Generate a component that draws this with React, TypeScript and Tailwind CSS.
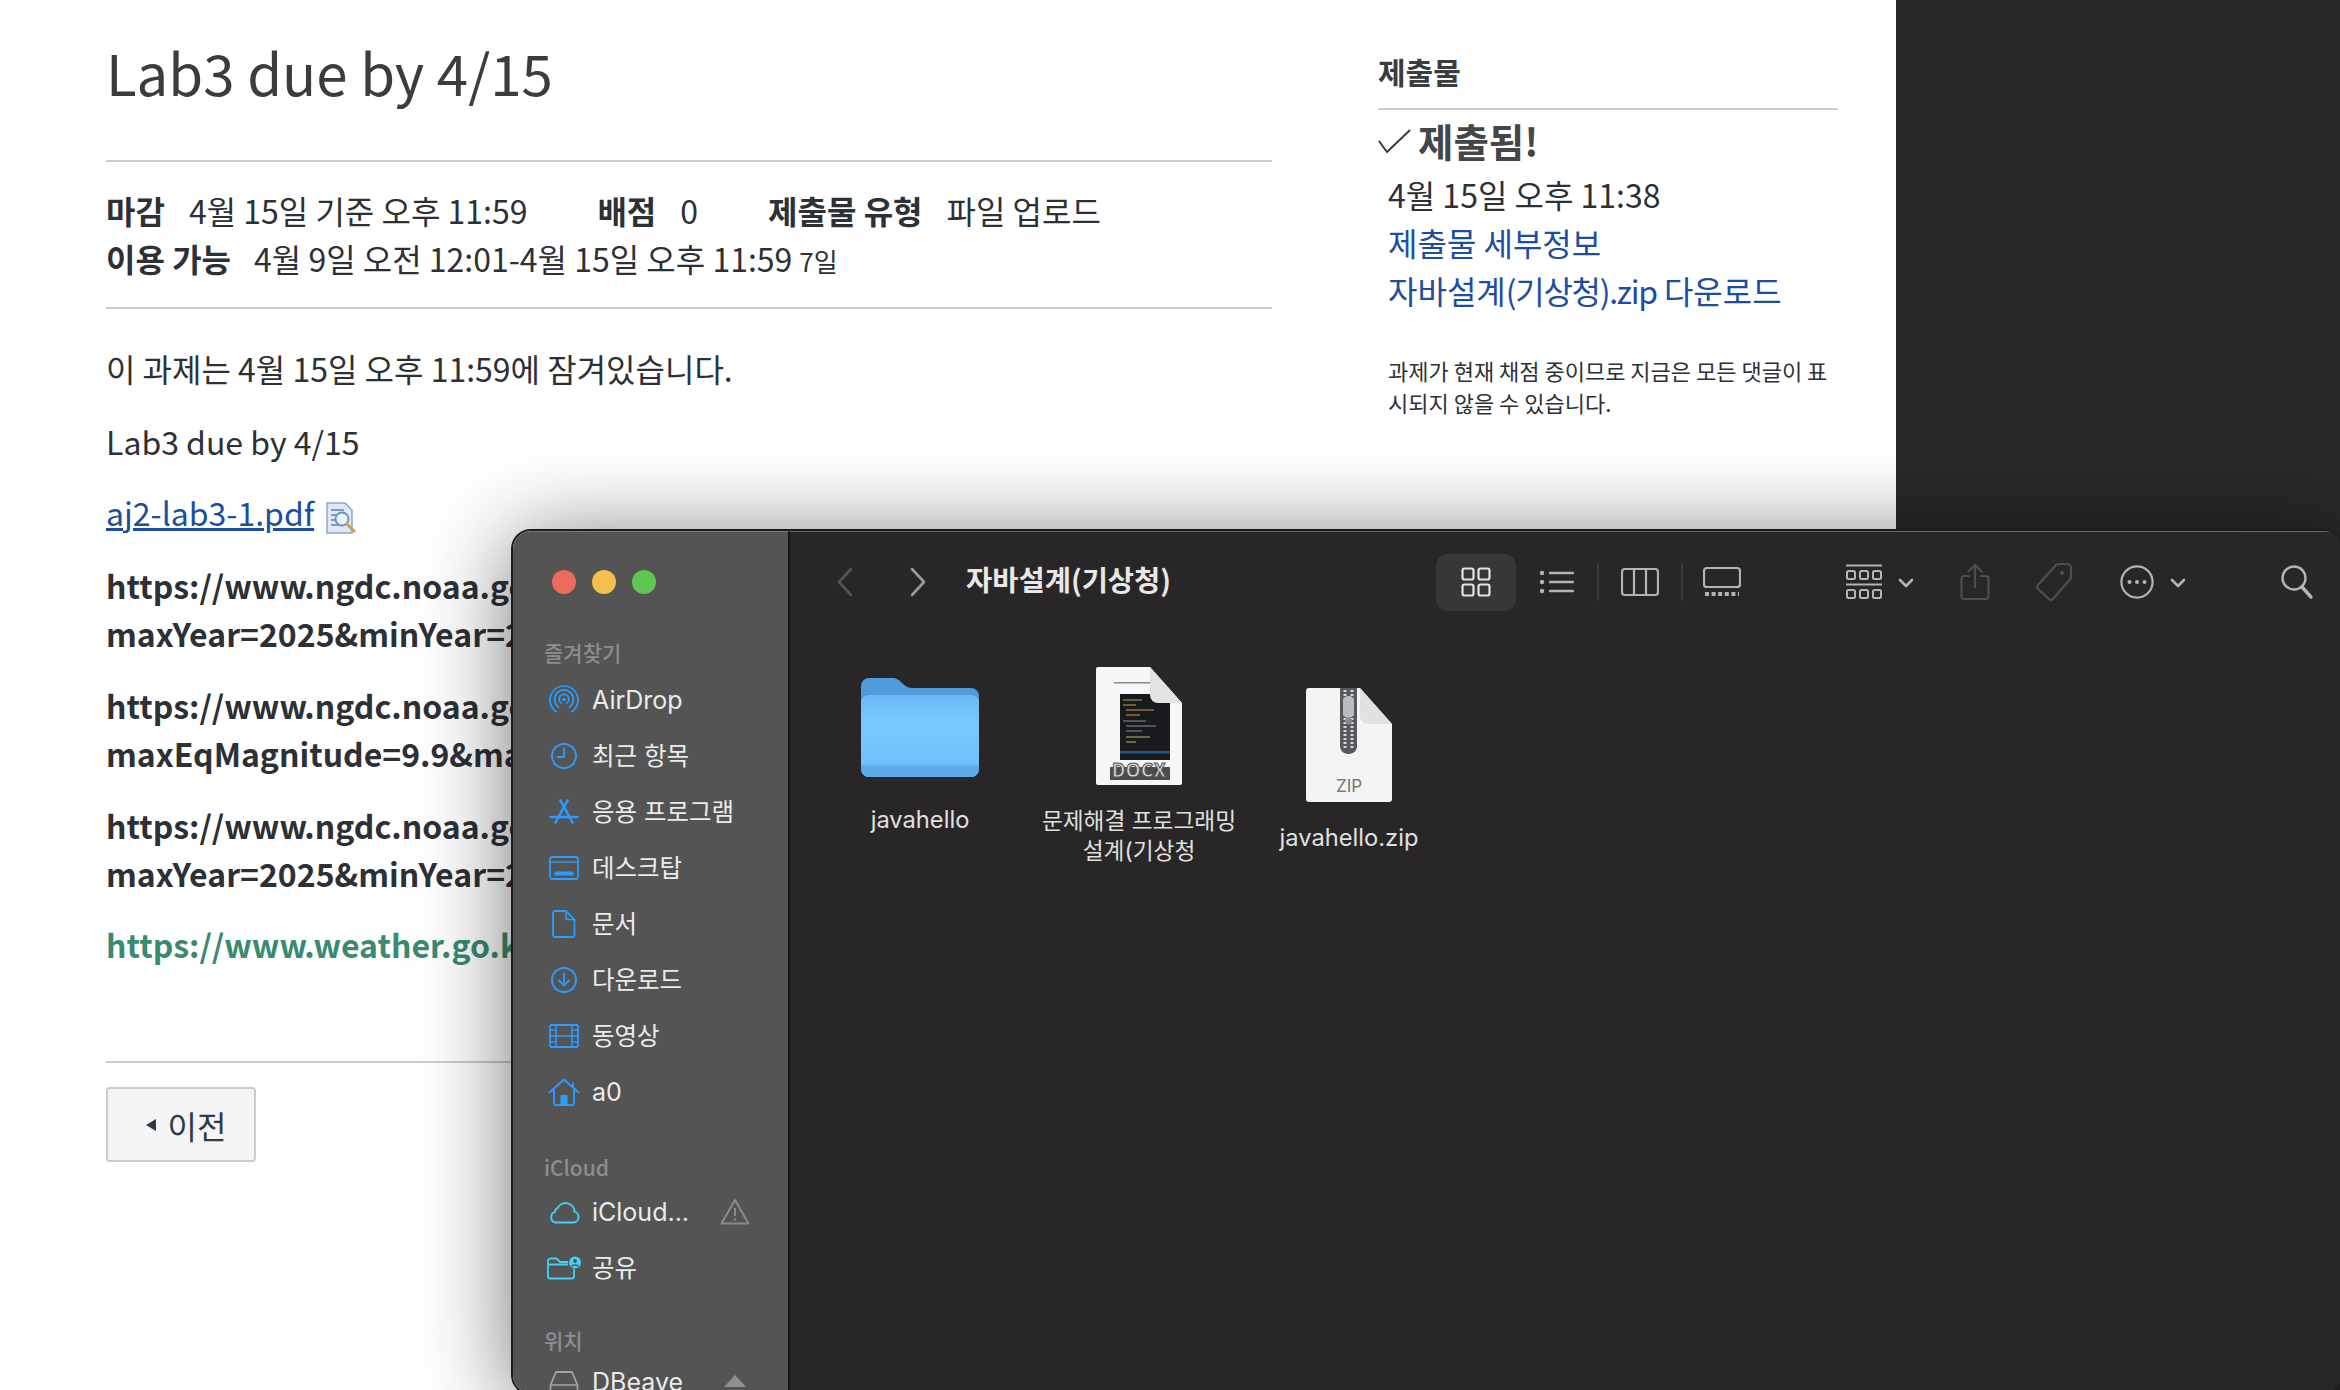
import type { ReactNode } from "react";

const blue = "#2b9bfd";
const cyan = "#45d1f5";

function Svg({ w, h, children, className }: { w: number; h: number; children: ReactNode; className?: string }) {
  return (
    <svg width={w} height={h} viewBox={`0 0 ${w} ${h}`} fill="none" className={className}>
      {children}
    </svg>
  );
}

const sidebarIcons: Record<string, ReactNode> = {
  airdrop: (
    <Svg w={30} h={30}>
      <g stroke={blue} strokeWidth="1.7" strokeLinecap="round">
        <path d="M7 26.5A14 14 0 1 1 23 26.5" />
        <path d="M9.8 22.2A9.4 9.4 0 1 1 20.2 22.2" />
        <path d="M12.4 18.4A4.9 4.9 0 1 1 17.6 18.4" />
      </g>
      <circle cx="15" cy="14.5" r="1.8" fill={blue} />
    </Svg>
  ),
  clock: (
    <Svg w={28} h={28}>
      <circle cx="14" cy="14" r="12" stroke={blue} strokeWidth="2" />
      <path d="M14 6.5V15H7.5" stroke={blue} strokeWidth="1.8" strokeLinecap="round" strokeLinejoin="round" />
    </Svg>
  ),
  apps: (
    <Svg w={30} h={26}>
      <g stroke={blue} strokeWidth="2.6" strokeLinecap="round">
        <path d="M1.5 18H28.5" />
        <path d="M11.5 1.5L23.5 23.5" />
        <path d="M18.5 1.5L6.5 23.5" />
      </g>
    </Svg>
  ),
  desktop: (
    <Svg w={30} h={24}>
      <rect x="1" y="1" width="28" height="22" rx="2.5" stroke={blue} strokeWidth="1.8" />
      <path d="M1 6H29" stroke={blue} strokeWidth="1.4" />
      <rect x="5.5" y="15.5" width="19" height="4" fill={blue} />
    </Svg>
  ),
  doc: (
    <Svg w={24} h={28}>
      <path
        d="M3.5 1H14L22.5 9.5V24.5A2.5 2.5 0 0 1 20 27H3.5A2.5 2.5 0 0 1 1 24.5V3.5A2.5 2.5 0 0 1 3.5 1Z"
        stroke={blue}
        strokeWidth="1.8"
      />
      <path d="M14 1V9.5H22.5" stroke={blue} strokeWidth="1.6" />
    </Svg>
  ),
  download: (
    <Svg w={28} h={28}>
      <circle cx="14" cy="14" r="12" stroke={blue} strokeWidth="2" />
      <path d="M14 7.5V19.5M9 14.5L14 19.5L19 14.5" stroke={blue} strokeWidth="1.8" strokeLinecap="round" strokeLinejoin="round" />
    </Svg>
  ),
  film: (
    <Svg w={30} h={24}>
      <rect x="1" y="1" width="28" height="22" rx="1.5" stroke={blue} strokeWidth="1.8" />
      <path d="M7 1V23M23 1V23M7 12H23M1 6H7M1 12H7M1 18H7M23 6H29M23 12H29M23 18H29" stroke={blue} strokeWidth="1.6" />
    </Svg>
  ),
  home: (
    <Svg w={32} h={28}>
      <path d="M1.5 14.5L16 1.5L30.5 14.5M25 5V9.5" stroke={blue} strokeWidth="1.9" strokeLinecap="round" strokeLinejoin="round" />
      <path d="M6 11.5V25A2 2 0 0 0 8 27H24A2 2 0 0 0 26 25V11.5" stroke={blue} strokeWidth="1.9" />
      <rect x="12.5" y="17" width="7" height="10" fill={blue} />
    </Svg>
  ),
  cloud: (
    <Svg w={32} h={24}>
      <path
        d="M8 22.5H25A5.5 5.5 0 0 0 26.5 11.7A8.8 8.8 0 0 0 10 7.6A6 6 0 0 0 6.8 12.2A5.3 5.3 0 0 0 8 22.5Z"
        stroke={cyan}
        strokeWidth="1.9"
        strokeLinejoin="round"
      />
    </Svg>
  ),
  shared: (
    <Svg w={34} h={24}>
      <path
        d="M1 5V20.5A2 2 0 0 0 3 22.5H25A2 2 0 0 0 27 20.5V13M1 5A2.5 2.5 0 0 1 3.5 2.5H9.5L13 6H21M1 8.5H21"
        stroke={cyan}
        strokeWidth="1.8"
        strokeLinejoin="round"
      />
      <circle cx="28" cy="6.5" r="6" fill={cyan} />
      <circle cx="28" cy="5" r="1.9" fill="#545454" />
      <path d="M24.6 10.3C25.4 8.6 30.6 8.6 31.4 10.3" stroke="#545454" strokeWidth="1.6" />
    </Svg>
  ),
  disk: (
    <Svg w={30} h={24}>
      <path d="M7 2H23L28.5 15V22H1.5V15Z" stroke="#a3a3a3" strokeWidth="1.8" strokeLinejoin="round" />
      <path d="M1.5 15H28.5" stroke="#a3a3a3" strokeWidth="1.6" />
    </Svg>
  ),
};

function SidebarRow({ icon, label, trailing }: { icon: string; label: string; trailing?: ReactNode }) {
  const size = /[가-힣]/.test(label) ? "text-[24.5px]" : "text-[25px]";
  return (
    <div className="flex h-[56px] shrink-0 items-center">
      <div className="flex w-[42px] shrink-0 items-center justify-center">{sidebarIcons[icon]}</div>
      <span className={`ml-[7px] leading-none text-[#ebebeb] font-['Inter','Noto_Sans_CJK_KR',sans-serif] ${size}`}>{label}</span>
      {trailing}
    </div>
  );
}

function SectionLabel({ children, className }: { children: ReactNode; className?: string }) {
  return (
    <div className={`h-[28px] shrink-0 pl-px text-[21px] leading-[28px] font-medium text-[#8e8e8e] ${className ?? ""}`}>
      {children}
    </div>
  );
}

function Toolbar() {
  const strong = "#b4b4b4";
  const dim = "#4f4f4f";
  return (
    <div className="flex h-[100px] items-center">
      <Svg w={20} h={30} className="ml-[45px]">
        <path d="M16 2L4 15L16 28" stroke="#555555" strokeWidth="2.6" strokeLinecap="round" strokeLinejoin="round" />
      </Svg>
      <Svg w={20} h={30} className="ml-[53px]">
        <path d="M4 2L16 15L4 28" stroke="#9a9a9a" strokeWidth="2.6" strokeLinecap="round" strokeLinejoin="round" />
      </Svg>
      <span className="mb-[5px] ml-[38px] w-[470px] text-[28.5px] leading-none font-semibold text-[#e8e8e8]">자바설계(기상청)</span>

      <div className="flex h-[57px] w-[80px] items-center justify-center rounded-[12px] bg-[#373737]">
        <Svg w={30} h={30}>
          <g stroke="#e4e4e4" strokeWidth="2.2">
            <rect x="1.5" y="1.5" width="11" height="11" rx="2" />
            <rect x="17.5" y="1.5" width="11" height="11" rx="2" />
            <rect x="1.5" y="17.5" width="11" height="11" rx="2" />
            <rect x="17.5" y="17.5" width="11" height="11" rx="2" />
          </g>
        </Svg>
      </div>
      <Svg w={36} h={26} className="ml-[23px]">
        <g fill={strong}>
          <circle cx="3" cy="4" r="2.2" />
          <circle cx="3" cy="13" r="2.2" />
          <circle cx="3" cy="22" r="2.2" />
          <rect x="10" y="2.8" width="25" height="2.4" rx="1" />
          <rect x="10" y="11.8" width="25" height="2.4" rx="1" />
          <rect x="10" y="20.8" width="25" height="2.4" rx="1" />
        </g>
      </Svg>
      <div className="ml-[22px] h-[38px] w-[2px] bg-[#3a3a3a]" />
      <Svg w={38} h={28} className="ml-[22px]">
        <rect x="1" y="1" width="36" height="26" rx="3" stroke={strong} strokeWidth="2.2" />
        <path d="M13 1V27M25 1V27" stroke={strong} strokeWidth="2.2" />
      </Svg>
      <div className="ml-[22px] h-[38px] w-[2px] bg-[#3a3a3a]" />
      <Svg w={38} h={30} className="ml-[20px]">
        <rect x="1" y="1" width="36" height="19" rx="3" stroke={strong} strokeWidth="2.2" />
        <path d="M2 27H36" stroke={strong} strokeWidth="4" strokeDasharray="4 2.6" />
      </Svg>

      <Svg w={36} h={36} className="ml-[105px]">
        <g stroke={strong} strokeWidth="2">
          <path d="M0 1.5H36M0 20.5H36" />
          <rect x="1" y="7" width="8" height="8" rx="1.5" />
          <rect x="14" y="7" width="8" height="8" rx="1.5" />
          <rect x="27" y="7" width="8" height="8" rx="1.5" />
          <rect x="1" y="26" width="8" height="8" rx="1.5" />
          <rect x="14" y="26" width="8" height="8" rx="1.5" />
          <rect x="27" y="26" width="8" height="8" rx="1.5" />
        </g>
      </Svg>
      <Svg w={16} h={10} className="ml-[16px] mt-[2px]">
        <path d="M2 2L8 8L14 2" stroke={strong} strokeWidth="2.6" strokeLinecap="round" strokeLinejoin="round" />
      </Svg>

      <Svg w={30} h={38} className="ml-[46px]">
        <g stroke={dim} strokeWidth="2.2" strokeLinejoin="round" strokeLinecap="round">
          <path d="M9 13H4A3 3 0 0 0 1.5 16V33A3 3 0 0 0 4 36H26A3 3 0 0 0 28.5 33V16A3 3 0 0 0 26 13H21" />
          <path d="M15 24V2M8.5 8.5L15 2L21.5 8.5" />
        </g>
      </Svg>

      <Svg w={38} h={40} className="ml-[45px]">
        <path
          d="M24 2H32A4 4 0 0 1 36 6V15A4 4 0 0 1 35 17.5L18 37A3 3 0 0 1 14 37L3 27A3 3 0 0 1 3 23L21 3A4 4 0 0 1 24 2Z"
          stroke={dim}
          strokeWidth="2.2"
        />
        <circle cx="27" cy="11" r="2" fill={dim} />
      </Svg>

      <Svg w={34} h={34} className="ml-[47px]">
        <circle cx="17" cy="17" r="15.6" stroke={strong} strokeWidth="2.2" />
        <g fill={strong}>
          <circle cx="9.5" cy="17" r="2" />
          <circle cx="17" cy="17" r="2" />
          <circle cx="24.5" cy="17" r="2" />
        </g>
      </Svg>
      <Svg w={16} h={10} className="ml-[16px] mt-[2px]">
        <path d="M2 2L8 8L14 2" stroke={strong} strokeWidth="2.6" strokeLinecap="round" strokeLinejoin="round" />
      </Svg>

      <Svg w={34} h={36} className="ml-[94px]">
        <circle cx="14" cy="14" r="11.5" stroke={strong} strokeWidth="2.4" />
        <path d="M22 23L31 33" stroke={strong} strokeWidth="3.4" strokeLinecap="round" />
      </Svg>
    </div>
  );
}

function FolderIcon() {
  return (
    <svg width="118" height="99" viewBox="0 0 118 99" fill="none">
      <defs>
        <linearGradient id="folderFront" x1="0" y1="0" x2="0" y2="1">
          <stop offset="0" stopColor="#6ab8f5" />
          <stop offset="0.35" stopColor="#7acafd" />
          <stop offset="1" stopColor="#6fbff8" />
        </linearGradient>
      </defs>
      <path d="M8 0H31C36 0 38 2 41 5C44 8 47 10 52 10H110A8 8 0 0 1 118 18V60H0V8A8 8 0 0 1 8 0Z" fill="#4f9bdb" />
      <rect y="17" width="118" height="82" rx="8" fill="url(#folderFront)" />
      <path d="M0 88H118V91A8 8 0 0 1 110 99H8A8 8 0 0 1 0 91Z" fill="#5cace9" />
      <rect y="86" width="118" height="1.5" fill="#66b5ef" />
    </svg>
  );
}

function DocxIcon() {
  return (
    <div className="relative h-[118px] w-[86px]">
      <svg width="86" height="118" viewBox="0 0 86 118" fill="none">
        <path d="M2 0H54L86 36V116A2 2 0 0 1 84 118H2A2 2 0 0 1 0 116V2A2 2 0 0 1 2 0Z" fill="#f7f7f7" />
        <rect x="18" y="15" width="36" height="1.5" fill="#888888" />
        <rect x="24" y="27" width="50" height="66" fill="#191a1e" />
        <g strokeWidth="1">
          <path d="M27 33H46M27 38H40M30 43H58M30 48H44" stroke="#b9a24f" />
          <path d="M27 54H50M30 59H60M30 64H46" stroke="#8a8f98" />
          <path d="M30 70H54M30 75H40" stroke="#c5b25c" />
        </g>
        <rect x="24" y="84" width="50" height="2.5" fill="#1d5a8a" />
        <rect x="14" y="100" width="60" height="13" fill="#4b4b4d" />
        <path d="M54 0L86 36H62A8 8 0 0 1 54 28Z" fill="#e3e3e3" />
      </svg>
      <span className="absolute left-0 right-0 top-[91px] text-center text-[19px] leading-[22px] font-bold tracking-[0.5px] text-[#d9d9d9] [-webkit-text-stroke:1px_#555555]">
        DOCX
      </span>
    </div>
  );
}

function ZipIcon() {
  return (
    <div className="relative h-[114px] w-[86px]">
      <svg width="86" height="114" viewBox="0 0 86 114" fill="none">
        <path d="M3 0H54L86 36V111A3 3 0 0 1 83 114H3A3 3 0 0 1 0 111V3A3 3 0 0 1 3 0Z" fill="#f4f4f4" />
        <path d="M34 0H51V58C51 63 47 66 42.5 66C38 66 34 63 34 58Z" fill="#56585c" />
        <path d="M39 2V60M46 2V60" stroke="#d8d8d8" strokeWidth="3" strokeDasharray="2 2" />
        <rect x="37" y="8" width="11" height="22" rx="5" fill="#b7bcc2" />
        <circle cx="42.5" cy="33" r="3.5" fill="#888c92" />
        <path d="M54 0L86 36H62A8 8 0 0 1 54 28Z" fill="#e2e2e2" />
      </svg>
      <span className="absolute left-0 right-0 top-[88px] text-center text-[17px] leading-[20px] text-[#77787a] font-['Inter',sans-serif]">
        ZIP
      </span>
    </div>
  );
}

function FileLabel({ children, size }: { children: ReactNode; size: string }) {
  return (
    <div className={`text-center leading-[30px] text-[#e0e0e0] font-['Inter','Noto_Sans_CJK_KR',sans-serif] ${size}`}>{children}</div>
  );
}

function FinderWindow() {
  return (
    <div className="absolute left-[511px] top-[529px] flex h-[866px] w-[1833px] overflow-hidden rounded-[20px] border-2 border-[#1c1c1c] shadow-[0_10px_90px_rgba(0,0,0,0.55)]">
      <aside className="flex w-[275px] shrink-0 flex-col border-t border-[#7a7a7a] bg-[#545454] pl-[30px] pr-[38px] pt-[38px]">
        <div className="flex shrink-0 gap-[16px] pl-[9px]">
          <div className="size-[24px] rounded-full bg-[#ec6a5e]" />
          <div className="size-[24px] rounded-full bg-[#f4bf4f]" />
          <div className="size-[24px] rounded-full bg-[#61c554]" />
        </div>
        <SectionLabel className="mt-[44px] mb-[6px]">즐겨찾기</SectionLabel>
        <SidebarRow icon="airdrop" label="AirDrop" />
        <SidebarRow icon="clock" label="최근 항목" />
        <SidebarRow icon="apps" label="응용 프로그램" />
        <SidebarRow icon="desktop" label="데스크탑" />
        <SidebarRow icon="doc" label="문서" />
        <SidebarRow icon="download" label="다운로드" />
        <SidebarRow icon="film" label="동영상" />
        <SidebarRow icon="home" label="a0" />
        <SectionLabel className="mt-[33px] mb-[3px]">iCloud</SectionLabel>
        <SidebarRow
          icon="cloud"
          label="iCloud..."
          trailing={
            <Svg w={30} h={28} className="ml-auto">
              <path d="M15 2L28.5 25.5H1.5Z" stroke="#8a8a8a" strokeWidth="2" strokeLinejoin="round" />
              <path d="M15 10V18M15 20.5V22.5" stroke="#8a8a8a" strokeWidth="2" />
            </Svg>
          }
        />
        <SidebarRow icon="shared" label="공유" />
        <SectionLabel className="mt-[30px]">위치</SectionLabel>
        <SidebarRow
          icon="disk"
          label="DBeave"
          trailing={
            <Svg w={22} h={14} className="ml-auto mr-[4px]">
              <path d="M11 0L22 12H0Z" fill="#8f8f8f" />
            </Svg>
          }
        />
      </aside>
      <main className="flex-1 border-l-2 border-t border-l-[#161616] border-t-[#666666] bg-[#282627]">
        <Toolbar />
        <div className="flex items-start">
          <div className="ml-[40px] mt-[46px] flex w-[180px] flex-col items-center">
            <FolderIcon />
            <div className="mt-[28px]">
              <FileLabel size="text-[23.7px]">javahello</FileLabel>
            </div>
          </div>
          <div className="ml-[24px] mt-[35px] flex w-[210px] flex-col items-center">
            <DocxIcon />
            <div className="mt-[21px]">
              <FileLabel size="text-[22.7px]">
                문제해결 프로그래밍
                <br />
                설계(기상청
              </FileLabel>
            </div>
          </div>
          <div className="ml-[5px] mt-[56px] flex w-[200px] flex-col items-center">
            <ZipIcon />
            <div className="mt-[21px]">
              <FileLabel size="text-[23.7px]">javahello.zip</FileLabel>
            </div>
          </div>
        </div>
      </main>
    </div>
  );
}

function PdfIcon() {
  return (
    <svg width="30" height="32" viewBox="0 0 30 32" fill="none" className="ml-[12px] inline-block align-[-8px]">
      <path d="M1 1H19L26 8V31H1Z" fill="#dfe8f4" stroke="#8ba6c8" strokeWidth="1.5" />
      <path d="M5 8H18M5 13H21M5 18H21M5 23H16" stroke="#5f83b5" strokeWidth="1.6" />
      <circle cx="16" cy="17" r="6.5" fill="#eaf2fb" stroke="#6f8fb8" strokeWidth="1.8" />
      <path d="M21 22L28 29" stroke="#d89a4e" strokeWidth="3" strokeLinecap="round" />
    </svg>
  );
}

function Meta({ label, children }: { label: string; children: ReactNode }) {
  return (
    <>
      <b className="font-bold">{label}</b>
      {children}
    </>
  );
}

export default function App() {
  return (
    <div className="relative flex h-[1390px] w-[2340px] overflow-hidden bg-[#29282b] font-['Noto_Sans_CJK_KR',sans-serif] text-[#2d3136]">
      <div className="flex w-[1896px] shrink-0 bg-white pl-[106px]">
        <div className="w-[1166px] shrink-0">
          <h1 className="mt-[36px] text-[56.4px] leading-[72px] font-normal text-[#3a3d40]">Lab3 due by 4/15</h1>
          <div className="mt-[52px] h-[2px] bg-[#c7cdd1]" />
          <div className="mt-[24px] text-[32px] leading-[48px]">
            <div>
              <Meta label="마감">
                <span className="ml-[24px]">4월 15일 기준 오후 11:59</span>
              </Meta>
              <span className="ml-[70px]">
                <Meta label="배점">
                  <span className="ml-[24px]">0</span>
                </Meta>
              </span>
              <span className="ml-[70px]">
                <Meta label="제출물 유형">
                  <span className="ml-[24px]">파일 업로드</span>
                </Meta>
              </span>
            </div>
            <div>
              <Meta label="이용 가능">
                <span className="ml-[23px]">4월 9일 오전 12:01-4월 15일 오후 11:59</span>
              </Meta>
              <span className="ml-[7px] text-[26px]">7일</span>
            </div>
          </div>
          <div className="mt-[22px] h-[2px] bg-[#c7cdd1]" />
          <div className="mt-[35px] text-[32px] leading-[48px]">
            <p>이 과제는 4월 15일 오후 11:59에 잠겨있습니다.</p>
            <p className="mt-[25px]">Lab3 due by 4/15</p>
            <p className="mt-[23px]">
              <a className="text-[#1c4d9e] underline">aj2-lab3-1.pdf</a>
              <PdfIcon />
            </p>
            <p className="mt-[25px] font-bold">
              https://www.ngdc.noaa.gov
              <br />
              maxYear=2025&minYear=2
            </p>
            <p className="mt-[24px] font-bold">
              https://www.ngdc.noaa.gov
              <br />
              maxEqMagnitude=9.9&ma
            </p>
            <p className="mt-[24px] font-bold">
              https://www.ngdc.noaa.gov
              <br />
              maxYear=2025&minYear=2
            </p>
            <p className="mt-[23px] font-bold text-[#3a8a72]">https://www.weather.go.kr</p>
          </div>
          <div className="mt-[93px] h-[2px] bg-[#c7cdd1]" />
          <button className="mt-[24px] flex h-[75px] w-[150px] items-center justify-center gap-[12px] rounded-[4px] border-2 border-[#c7cdd1] bg-[#f5f5f5] pl-[10px] text-[32px] text-[#2d3b45]">
            <svg width="10" height="12" viewBox="0 0 10 12">
              <path d="M0 6L10 0V12Z" fill="#2d3b45" />
            </svg>
            이전
          </button>
        </div>
        <aside className="ml-[106px] w-[460px] shrink-0 pt-[47px]">
          <h2 className="text-[30px] leading-[48px] font-bold text-[#3a3d40]">제출물</h2>
          <div className="mt-[13px] h-[2px] bg-[#c7cdd1]" />
          <div className="mt-[1px] flex h-[59px] items-center">
            <svg width="34" height="24" viewBox="0 0 34 24" fill="none" className="mr-[6px]">
              <path d="M1 12L9 23L32 1" stroke="#3a3d40" strokeWidth="2" />
            </svg>
            <span className="text-[38.5px] font-bold text-[#444648]">제출됨!</span>
          </div>
          <div className="pl-[10px] text-[32px] leading-[48px]">
            <div>4월 15일 오후 11:38</div>
            <a className="block text-[#1c4d9e]">제출물 세부정보</a>
            <a className="block text-[#1c4d9e]">
              자바설계<span className="tracking-[-1.3px]">(기상청).zip</span> 다운로드
            </a>
            <p className="mt-[40px] text-[22px] leading-[32px]">
              과제가 현재 채점 중이므로 지금은 모든 댓글이 표
              <br />
              시되지 않을 수 있습니다.
            </p>
          </div>
        </aside>
      </div>
      <FinderWindow />
    </div>
  );
}
